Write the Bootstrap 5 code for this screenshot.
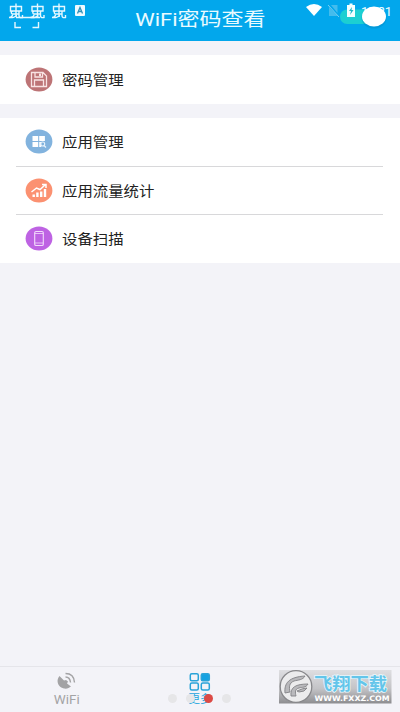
<!DOCTYPE html>
<html lang="zh-CN">
<head>
<meta charset="utf-8">
<meta name="viewport" content="width=device-width, initial-scale=1">
<title>WiFi密码查看</title>
<link href="https://cdn.jsdelivr.net/npm/bootstrap@5.3.0/dist/css/bootstrap.min.css" rel="stylesheet">
<style>
body{font-family:Roboto,"Noto Sans CJK SC",sans-serif;background:#f3f3f8;height:712px;overflow:hidden;color:#222}
svg{display:block;flex:none}
.topbar{height:41px;background:#02a7ec;color:#e9fbff}
.topbar h1{font-size:19px;line-height:39px;transform:scaleX(1.155);font-weight:400}
.status-left{left:0;top:0}
.status-right{right:0;top:0}
.panel{margin-top:14px;background:#fff}
.entry{height:48.5px;padding-left:25px;gap:9px}
.entry-label{font-size:14px;line-height:20px;padding-top:1px;transform:scaleX(1.1);transform-origin:left}
.rule{height:1px;background:#d8d8da;margin:-.5px 17px -.5px 16px}
.tabs{height:46px;border-top:1px solid #e5e5ea}
.tab{width:133.33px;padding-top:5px;color:#a3a3a5;font-size:13.5px;line-height:15px}
.tab-on{color:#1ba3dc;font-size:11.5px}
.dots{left:168px;top:694px;gap:9px}
.dot{width:9px;height:9px;background:#e6e6e8}
.dot-on{background:#dc4a45}
.stamp{left:279px;top:669px}
</style>
<script src="https://cdn.jsdelivr.net/npm/bootstrap@5.3.0/dist/js/bootstrap.bundle.min.js"></script>
</head>
<body class="d-flex flex-column position-relative m-0">
<header class="topbar position-relative d-flex justify-content-center align-items-start flex-shrink-0">
  <svg class="status-left position-absolute" width="100" height="34" fill="none" stroke="#e6f8ff" stroke-width="1.400">
    <defs><g id="bug"><path d="M1.500 3h11v4.500h-11zM7 0v12.500M3.500 7.500c-2 1-1.500 3 .5 3h6M3.500 10.500c0 2.500-1.500 3.500-3.500 3.500h3.500c2 0 2.500-1.500 4.500-1.500M10 8v4c0 2 1 2.500 3.500 2v-2.500"/></g></defs>
    <use href="#bug" x="9" y="3.500"/><use href="#bug" x="30.500" y="3.500"/><use href="#bug" x="52" y="3.500"/>
    <path d="M16 17.500h24M15 22v5.500h6M38.500 22v5.500h-6"/>
    <rect x="75" y="5" width="10" height="11" rx="1" fill="#f0faff" stroke="none"/>
    <path d="M77.500 13.500l2.500-6 2.500 6M78.500 11.500h3" stroke="#3090b8" stroke-width="1.300"/>
  </svg>
  <h1 class="m-0">WiFi密码查看</h1>
  <svg class="status-right position-absolute" width="100" height="34">
    <path d="M6 7q8-6 16 0l-8 9z" fill="#fff"/>
    <path d="M29 7l8.500 9H29zM31 5h6.500v8z" fill="#5bc3ee" opacity=".75"/>
    <path d="M28 5l11 12" stroke="#7bd0f2"/>
    <rect x="40" y="9.500" width="40" height="14.500" rx="7.250" fill="#1ccfd2"/>
    <path d="M47 5h2.500V3.500h3V5H55v12h-8z" fill="#f3ffff"/>
    <path d="M52 7l-3 4h2l-1 4 3.500-5h-2z" fill="#20b8c8"/>
    <text x="61" y="15.500" font-size="13" fill="#e9fbff" font-family="Roboto,sans-serif" textLength="31">12:31</text>
    <ellipse cx="74" cy="18" rx="12.500" ry="10.500" fill="#0785bb" opacity=".35"/>
    <ellipse cx="74" cy="16.500" rx="12" ry="10" fill="#fff"/>
  </svg>
</header>

<main class="flex-grow-1">
  <section class="panel">
    <div class="entry d-flex align-items-center">
      <svg width="28" height="25"><ellipse cx="14" cy="12.500" rx="13.400" ry="12" fill="#bd7476"/><g fill="none" stroke="#f8e3e3" stroke-width="1.300"><path d="M6.500 5.500h11.500l3.500 3.500v10.500h-15zM10 5.500v4.500h7.500V5.500M9.500 19.500v-6.500h9v6.500"/></g><path d="M14 6.500h2v2.500h-2z" fill="#f8e3e3"/></svg>
      <span class="entry-label">密码管理</span>
    </div>
  </section>
  <section class="panel">
    <div class="entry d-flex align-items-center">
      <svg width="28" height="25"><ellipse cx="14" cy="12.500" rx="13.400" ry="12" fill="#82b3de"/><path d="M7.500 7h5.700v5H7.500zM14.200 7h5.700v5h-5.700zM7.500 13h5.700v5H7.500zM14.200 13h2v5h-2z" fill="#fff"/><circle cx="17.700" cy="15" r="2" fill="none" stroke="#e8f3fc" stroke-width="1.100"/><path d="M19 16.500l2 2" stroke="#e8f3fc" stroke-width="1.300"/></svg>
      <span class="entry-label">应用管理</span>
    </div>
    <div class="rule"></div>
    <div class="entry d-flex align-items-center">
      <svg width="28" height="25"><ellipse cx="14" cy="12.500" rx="13.400" ry="12" fill="#fb9171"/><path d="M7.500 16.500h2.400V19H7.500zM11.200 14.500h2.400V19h-2.400zM15 13.500h2.400V19H15zM18.800 11h2.400v8h-2.400z" fill="#fff"/><path d="M6.500 14l5-4 3.500 1.500 5-4.500M17 6.500h4V10" fill="none" stroke="#fff" stroke-width="1.500"/></svg>
      <span class="entry-label">应用流量统计</span>
    </div>
    <div class="rule"></div>
    <div class="entry d-flex align-items-center">
      <svg width="28" height="25"><ellipse cx="14" cy="12.500" rx="13.400" ry="12" fill="#be63e3"/><rect x="9.700" y="5.500" width="8.600" height="14" rx="1.300" fill="none" stroke="#f2dcfb" stroke-width="1.100"/><path d="M9.700 7.500h8.600M9.700 17h8.600" stroke="#f2dcfb" stroke-width=".8"/></svg>
      <span class="entry-label">设备扫描</span>
    </div>
  </section>
</main>

<nav class="tabs d-flex flex-shrink-0">
  <div class="tab d-flex flex-column align-items-center">
    <svg width="22" height="20" fill="none" stroke="#a3a3a5"><path d="M3.500 4C-.5 8.500 2 15.500 8 16.500c3 .5 5-.5 7-2l-4-3 1-2-2-1.500-2 .5z" fill="#a3a3a5" stroke="none"/><path d="M9.500 5q4.500 0 5 5.500M9.500 1.500q8.500 0 9 9" stroke-width="1.400"/></svg>
    <span>WiFi</span>
  </div>
  <div class="tab tab-on d-flex flex-column align-items-center">
    <svg width="22" height="20" fill="none" stroke="#2aa3d8" stroke-width="1.500"><rect x="1.300" y="1.800" width="8" height="7" rx="1.500"/><rect x="12.300" y="1.800" width="8" height="7" rx="1.500" fill="#14a2e2"/><rect x="1.300" y="11" width="8" height="7" rx="1.500"/><rect x="12.300" y="11" width="8" height="7" rx="1.500"/></svg>
    <span>更多</span>
  </div>
</nav>

<div class="dots d-flex position-absolute">
  <span class="dot rounded-circle"></span><span class="dot rounded-circle"></span><span class="dot dot-on rounded-circle"></span><span class="dot rounded-circle"></span>
</div>

<svg class="stamp position-absolute" width="113" height="36">
  <defs><linearGradient id="plate" x2="0" y2="1"><stop stop-color="#dedee1"/><stop offset=".55" stop-color="#c4c4c7"/><stop offset="1" stop-color="#8d8d90"/></linearGradient></defs>
  <rect y="1" width="112.500" height="33.500" fill="url(#plate)"/>
  <circle cx="17" cy="17.500" r="15.800" fill="#ececed" stroke="#88888b" stroke-width="1.300"/>
  <path d="M6 24c-1-10 4-16 20-17-2 4-7 4-11 5-5 2-5 6-4 11zM12 27c-1-9 5-12 17-12-2 4-6 3-9 4-4 1-4 4-3 8zM18 22q6-3 10-3-2 4-8 4z" fill="#b9b9bc" stroke="#828286" stroke-width=".9"/>
  <text x="35" y="20.500" font-size="17.500" font-weight="700" font-family="Noto Sans CJK SC,sans-serif" fill="#63c5ea" stroke="#e8f7fc" stroke-width="1.600" paint-order="stroke" textLength="73" lengthAdjust="spacingAndGlyphs">飞翔下载</text>
  <text x="35.500" y="32" font-size="7.500" font-weight="700" font-family="DejaVu Sans,sans-serif" fill="#fff" textLength="75" lengthAdjust="spacingAndGlyphs">WWW.FXXZ.COM</text>
</svg>
</body>
</html>
